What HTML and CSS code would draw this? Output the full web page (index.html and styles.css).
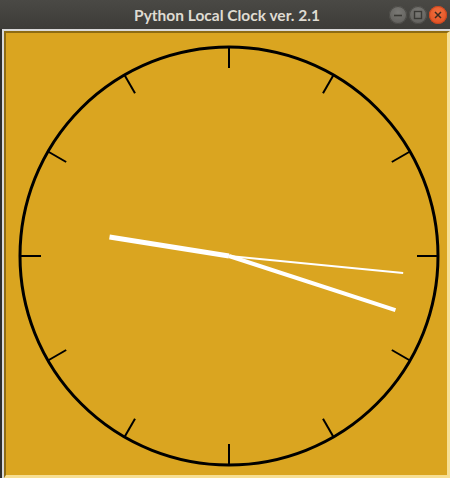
FILE: index.html
```html
<!DOCTYPE html>
<html lang="en">
<head>
    <meta charset="UTF-8">
    <title>Python Local Clock ver. 2.1</title>
    <link rel="stylesheet" href="styles.css">
</head>
<body>
    <div class="window">
        <div class="titlebar">
            <span></span>
            <span class="title">Python Local Clock ver. 2.1</span>
            <div class="controls">
                <span class="ctl ctl-min"><svg width="18" height="18" viewBox="0 0 18 18"><path d="M5 9.5h8" stroke="#3a3935" stroke-width="1.6"/></svg></span>
                <span class="ctl ctl-max"><svg width="18" height="18" viewBox="0 0 18 18"><rect x="5.5" y="5.5" width="7" height="7" fill="none" stroke="#3a3935" stroke-width="1.4"/></svg></span>
                <span class="ctl ctl-close"><svg width="18" height="18" viewBox="0 0 18 18"><path d="M6 6l6 6M12 6l-6 6" stroke="#3b2a20" stroke-width="1.5"/></svg></span>
            </div>
        </div>
        <div class="frame">
            <div class="canvas">
                <svg id="clock" width="441" height="442" viewBox="6 33 441 442"></svg>
            </div>
        </div>
    </div>

    <script>
        const svg = document.getElementById("clock");
        const cx = 229, cy = 256, r = 209;
        const ns = "http://www.w3.org/2000/svg";

        function line(x1, y1, x2, y2, cls) {
            const l = document.createElementNS(ns, "line");
            l.setAttribute("x1", x1);
            l.setAttribute("y1", y1);
            l.setAttribute("x2", x2);
            l.setAttribute("y2", y2);
            l.setAttribute("class", cls);
            svg.appendChild(l);
        }

        const face = document.createElementNS(ns, "circle");
        face.setAttribute("cx", cx);
        face.setAttribute("cy", cy);
        face.setAttribute("r", r);
        face.setAttribute("class", "face");
        svg.appendChild(face);

        // 12 tick marks
        for (let i = 0; i < 12; i++) {
            const a = i * Math.PI / 6;
            const s = Math.sin(a), c = Math.cos(a);
            line(cx + s * r, cy - c * r, cx + s * 188, cy - c * 188, "tick");
        }

        // time shown in the shot: 9:18:16
        function hand(deg, len, cls) {
            const a = deg * Math.PI / 180;
            line(cx, cy, cx + Math.sin(a) * len, cy - Math.cos(a) * len, cls);
        }
        hand(279, 121, "hand-hour");
        hand(108, 175, "hand-min");
        hand(95.6, 175, "hand-sec");
    </script>
</body>
</html>
```

FILE: styles.css
```css
body {
    margin: 0;
    background: #3c3b37;
    font-family: "DejaVu Sans", "Noto Sans", sans-serif;
}

.window {
    width: 450px;
    height: 478px;
    display: flex;
    flex-direction: column;
    overflow: hidden;
}

.titlebar {
    height: 29px;
    flex: none;
    display: grid;
    grid-template-columns: 1fr auto 1fr;
    align-items: center;
    background: linear-gradient(#4a4945, #3d3c38);
}

.title {
    font-family: Lato, "DejaVu Sans", sans-serif;
    color: #dfdbd2;
    font-weight: bold;
    font-size: 15.5px;
    padding-left: 4px;
    padding-top: 1px;
}

.controls {
    display: flex;
    justify-content: flex-end;
    gap: 2px;
    padding-right: 3px;
    padding-top: 1px;
}

.ctl {
    width: 18px;
    height: 18px;
    border-radius: 50%;
    display: flex;
}

.ctl-min, .ctl-max {
    background: radial-gradient(circle at 50% 35%, #7a7975, #5a5955);
    box-shadow: inset 0 0 0 1px #4a4945;
}

.ctl-close {
    background: radial-gradient(circle at 50% 35%, #f0703f, #de4a1c);
    box-shadow: inset 0 0 0 1px #c6451f;
}

.frame {
    flex: 1;
    display: flex;
    border-left: 2px solid #2f2e2b;
    padding: 2px 0 0 2px;
    background: #d9d9d9;
}

.canvas {
    flex: 1;
    display: flex;
    background: #daa520;
    border-style: solid;
    border-width: 2px 3px 3px 2px;
    border-color: #8d6b13 #f7df93 #f7df93 #8d6b13;
}

.face {
    fill: none;
    stroke: #000;
    stroke-width: 3;
}

.tick {
    stroke: #000;
    stroke-width: 2;
}

.hand-hour {
    stroke: #fff;
    stroke-width: 5;
}

.hand-min {
    stroke: #fff;
    stroke-width: 4;
}

.hand-sec {
    stroke: #fff;
    stroke-width: 2;
}
```
